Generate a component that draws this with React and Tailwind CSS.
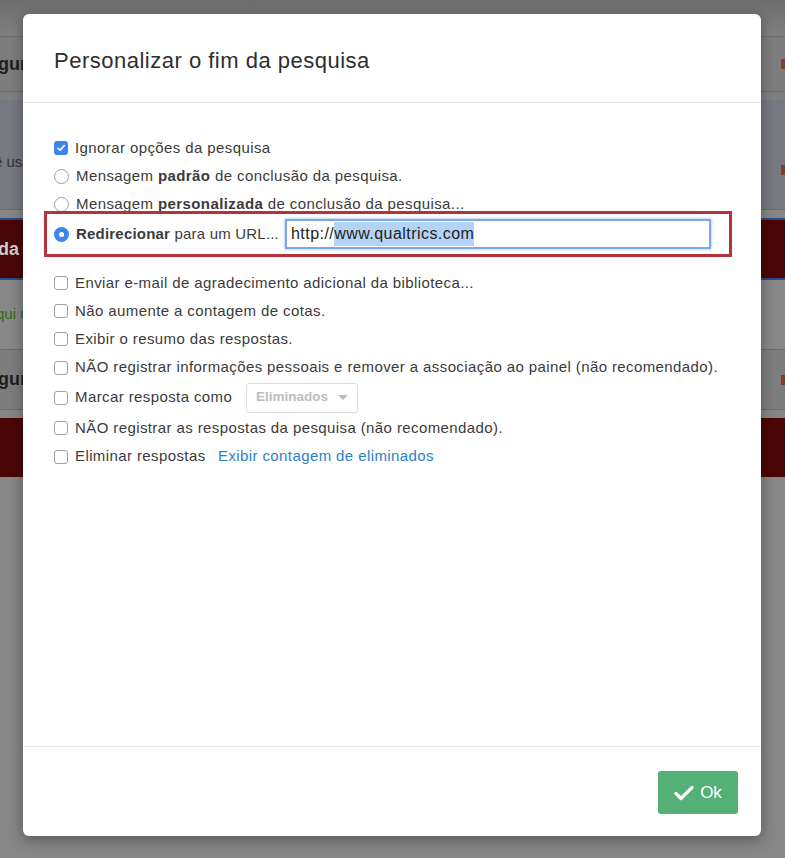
import React from "react";

const font = { fontFamily: '"Liberation Sans", Arial, sans-serif' };

function Box({ checked }) {
  if (checked) {
    return (
      <span className="w-[14px] h-[14px] rounded-[3px] bg-[#3d86ef] flex items-center justify-center shrink-0">
        <svg width="10" height="10" viewBox="0 0 10 10">
          <path d="M2 5.2 L4.1 7.3 L8.2 2.6" fill="none" stroke="white" strokeWidth="1.6" strokeLinecap="round" strokeLinejoin="round" />
        </svg>
      </span>
    );
  }
  return <span className="w-[14px] h-[14px] rounded-[3px] border border-[#a0a0a0] bg-white shrink-0" />;
}

function Radio({ checked }) {
  if (checked) {
    return (
      <span className="w-[15px] h-[15px] rounded-full bg-[#3d86ef] flex items-center justify-center shrink-0">
        <span className="w-[5px] h-[5px] rounded-full bg-white" />
      </span>
    );
  }
  return <span className="w-[15px] h-[15px] rounded-full border border-[#a0a0a0] bg-white shrink-0" />;
}

function Row({ children, h = "h-[28px]", control }) {
  return (
    <div className={`flex items-center gap-[7px] ${h}`}>
      {control}
      <span className="text-[15px] tracking-[0.4px] text-[#3b3b3b] flex items-center whitespace-nowrap">{children}</span>
    </div>
  );
}

function Background() {
  return (
    <div className="w-full h-full flex flex-col bg-[#868686]">
      <div className="h-[37px] bg-gradient-to-b from-[#6e6e6e] to-[#7f7f7f] border-b border-[#6c6c6c]" />
      <div className="h-[55px] bg-[#7d7d7d] border-b border-[#6c6c6c] flex items-center justify-between">
        <span className="text-[18px] font-bold text-[#1e1e1e] ml-[-12px]">egur</span>
        <span className="w-[6px] h-[10px] bg-[#8a3a2a] mr-[-2px]" />
      </div>
      <div className="h-[8px] bg-[#7e7e7e]" />
      <div className="h-[110px] bg-[#767a80] border-b border-[#6c6c6c] flex items-center justify-between pt-[16px]">
        <span className="text-[15px] text-[#333] ml-[-6px]">ê usa</span>
        <span className="w-[6px] h-[10px] bg-[#8a3a2a] mr-[-2px] mt-[14px]" />
      </div>
      <div className="h-[8px] bg-[#868686]" />
      <div className="h-[62px] bg-[#4a0606] border-y-2 border-[#2b4a86] flex items-center">
        <span className="text-[18px] font-bold text-[#cfcfcf] ml-[-2px]">da p</span>
      </div>
      <div className="h-[70px] bg-[#878787] border-b border-[#6c6c6c] flex items-center">
        <span className="text-[15px] text-[#2f6a12] ml-[-4px]">qui u</span>
      </div>
      <div className="h-[60px] bg-[#7d7d7d] border-b border-[#6c6c6c] flex items-center justify-between">
        <span className="text-[18px] font-bold text-[#1e1e1e] ml-[-12px]">egur</span>
        <span className="w-[6px] h-[10px] bg-[#8a3a2a] mr-[-2px]" />
      </div>
      <div className="h-[8px] bg-[#868686]" />
      <div className="h-[59px] bg-[#4a0606]" />
      <div className="flex-1 bg-[#868686]" />
    </div>
  );
}

export default function App() {
  return (
    <div className="relative w-[785px] h-[858px] overflow-hidden" style={font}>
      <Background />
      <div className="absolute left-[23px] top-[14px] w-[738px] h-[822px] bg-white rounded-[6px] shadow-[0_4px_14px_rgba(0,0,0,0.35)] flex flex-col">
        <div className="h-[89px] border-b border-[#e6e6e6] flex items-center pl-[31px] pt-[4px]">
          <h1 className="text-[22px] tracking-[0.5px] font-medium text-[#2e2e2e] whitespace-nowrap">
            Personalizar o fim da pesquisa
          </h1>
        </div>
        <div className="flex-1 pl-[31px] pt-[31px] flex flex-col">
          <Row control={<Box checked />}>Ignorar opções da pesquisa</Row>
          <Row control={<Radio />}>
            Mensagem&nbsp;<b className="font-bold">padrão</b>&nbsp;de conclusão da pesquisa.
          </Row>
          <Row control={<Radio />}>
            Mensagem&nbsp;<b className="font-bold">personalizada</b>&nbsp;de conclusão da pesquisa...
          </Row>
          <div className="ml-[-10px] mr-[29px] mt-[-7px] h-[46px] border-[3px] border-[#b3323b] flex items-center pl-[7px] pr-[18px]">
            <div className="w-[231px] shrink-0 flex items-center gap-[7px]">
              <Radio checked />
              <span className="text-[15px] tracking-[0.2px] text-[#3b3b3b] whitespace-nowrap">
                <b className="font-bold">Redirecionar</b> para um URL...
              </span>
            </div>
            <div className="flex-1 h-[30px] border-2 border-[#7aa6ea] shadow-[0_0_3px_#8fb5f0] bg-white flex items-center pl-[4px] text-[16px] tracking-[0.45px] text-[#1e1e1e] whitespace-nowrap">
              <span>http://</span>
              <span className="bg-[#b5d3f6]">www.qualtrics.com</span>
            </div>
          </div>
          <div className="h-[12px]" />
          <Row control={<Box />}>Enviar e-mail de agradecimento adicional da biblioteca...</Row>
          <Row control={<Box />}>Não aumente a contagem de cotas.</Row>
          <Row control={<Box />}>Exibir o resumo das respostas.</Row>
          <Row h="h-[29px]" control={<Box />}>
            NÃO registrar informações pessoais e remover a associação ao painel (não recomendado).
          </Row>
          <div className="flex items-center h-[31px]">
            <div className="w-[192px] shrink-0 flex items-center gap-[7px]">
              <Box />
              <span className="text-[15px] tracking-[0.4px] text-[#3b3b3b] whitespace-nowrap">Marcar resposta como</span>
            </div>
            <div className="w-[112px] h-[30px] border border-[#dcdcdc] rounded-[3px] flex items-center justify-between pl-[9px] pr-[9px]">
              <span className="text-[13.5px] font-bold text-[#bdbdbd]">Eliminados</span>
              <svg width="10" height="6" viewBox="0 0 10 6">
                <path d="M0 0 L10 0 L5 5 Z" fill="#bdbdbd" />
              </svg>
            </div>
          </div>
          <Row h="h-[30px]" control={<Box />}>NÃO registrar as respostas da pesquisa (não recomendado).</Row>
          <div className="flex items-center h-[27px]">
            <div className="w-[164px] shrink-0 flex items-center gap-[7px]">
              <Box />
              <span className="text-[15px] tracking-[0.4px] text-[#3b3b3b] whitespace-nowrap">Eliminar respostas</span>
            </div>
            <span className="text-[15px] tracking-[0.4px] text-[#2b80cc] whitespace-nowrap">Exibir contagem de eliminados</span>
          </div>
        </div>
        <div className="h-[90px] border-t border-[#e6e6e6] flex items-center justify-end pr-[23px]">
          <button className="w-[80px] h-[43px] rounded-[3px] bg-[#54b077] flex items-center justify-center gap-[6px] text-white text-[17px] mt-[2px]">
            <svg width="20" height="16" viewBox="0 0 20 16">
              <path d="M2 8.5 L7 13.5 L18 2.5" fill="none" stroke="white" strokeWidth="3.2" strokeLinecap="round" strokeLinejoin="round" />
            </svg>
            <span>Ok</span>
          </button>
        </div>
      </div>
    </div>
  );
}
